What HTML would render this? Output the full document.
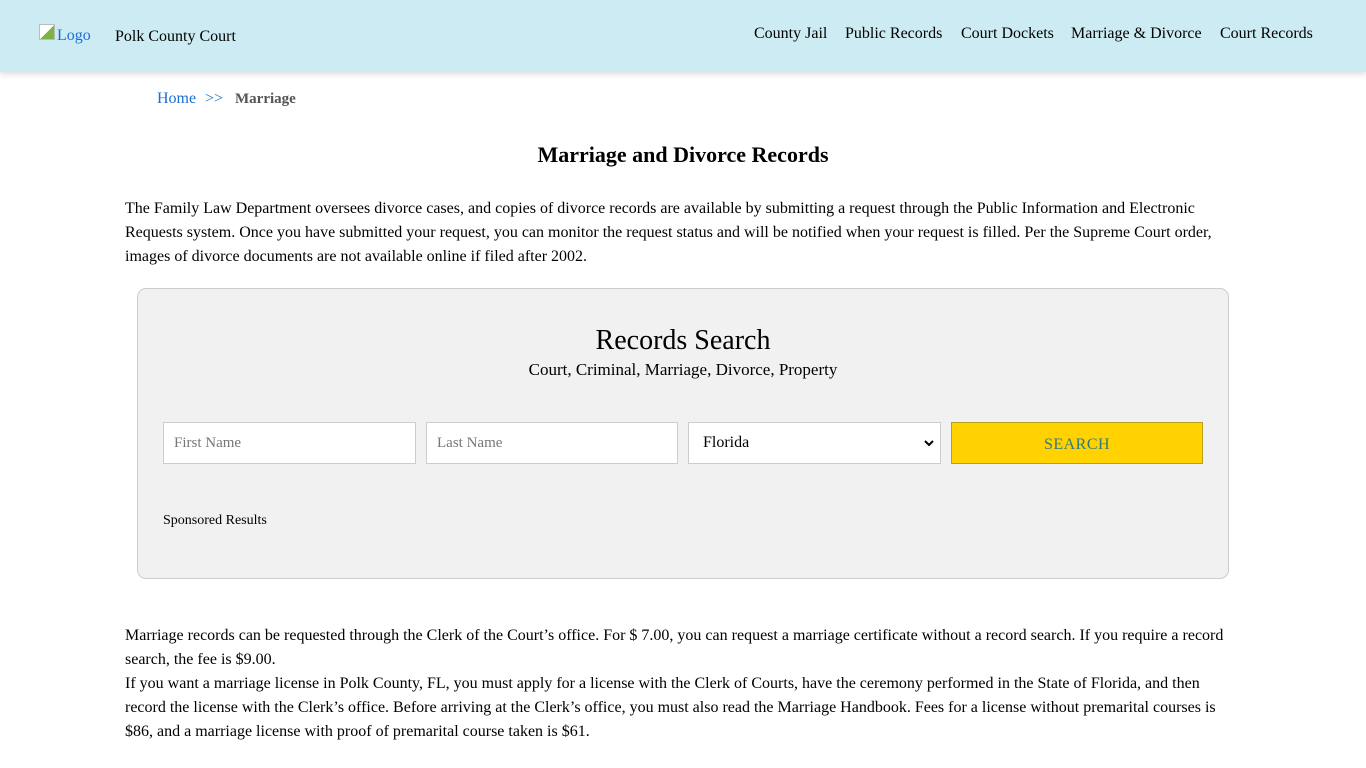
<!DOCTYPE html>
<html><head><meta charset="utf-8"><style>
*{box-sizing:border-box;margin:0;padding:0}
body{width:1366px;height:768px;overflow:hidden;background:#fff;font-family:"Liberation Serif",serif;color:#000}
.hdr{position:absolute;left:0;top:0;width:1366px;height:72px;background:#cdebf2;box-shadow:0 2px 6px rgba(0,0,0,.15)}
.logo{position:absolute;left:57px;top:27px;font-size:16px;color:#1a6fd0}
.img{position:absolute;left:39px;top:24px;width:16px;height:16px;border:1px solid #bbb;background:linear-gradient(135deg,#fff 50%,#7cb342 50%)}
.site{position:absolute;left:115px;top:28px;font-size:16px}
.nav{position:absolute;top:25px;font-size:16px}
.bc{position:absolute;left:157px;top:90px;font-size:16px}
.bc a{color:#1a6fd0;position:absolute;white-space:nowrap}
h1{position:absolute;left:0;width:1366px;top:142px;text-align:center;font-size:22px;font-weight:bold}
p{position:absolute;left:125px;width:1112px;font-size:16px;line-height:24px}
.box{position:absolute;left:137px;top:288px;width:1092px;height:291px;background:#f1f1f1;border:1px solid #ccc;border-radius:9px}
.t1{position:absolute;left:0;width:100%;top:325px;text-align:center;font-size:28px}
.t2{position:absolute;left:0;width:100%;top:360px;text-align:center;font-size:17px}
.in{position:absolute;top:422px;height:42px;background:#fff;border:1px solid #ccc;font-size:15px;color:#777;padding:12px 10px}
.btn{position:absolute;left:951px;top:422px;width:252px;height:42px;background:#ffd200;border:1px solid #b8a020;color:#2f7a80;font-size:16px;text-align:center;line-height:44px;letter-spacing:.5px}
.sp{position:absolute;left:163px;top:513px;font-size:14px}
</style></head><body>
<div class="hdr">
<span class="img"></span><span class="logo">Logo</span><span class="site">Polk County Court</span>
<span class="nav" style="left:754px">County Jail</span>
<span class="nav" style="left:845px">Public Records</span>
<span class="nav" style="left:961px">Court Dockets</span>
<span class="nav" style="left:1071px">Marriage &amp; Divorce</span>
<span class="nav" style="left:1220px">Court Records</span>
</div>
<div class="bc"><a style="left:0">Home</a><a style="left:48px">&gt;&gt;</a><b style="position:absolute;left:78px;color:#555;font-size:15px;white-space:nowrap;top:1px">Marriage</b></div>
<h1>Marriage and Divorce Records</h1>
<p style="top:197px">The Family Law Department oversees divorce cases, and copies of divorce records are available by submitting a request through the Public Information and Electronic Requests system. Once you have submitted your request, you can monitor the request status and will be notified when your request is filled. Per the Supreme Court order, images of divorce documents are not available online if filed after 2002.</p>
<div class="box"></div>
<div class="t1">Records Search</div>
<div class="t2">Court, Criminal, Marriage, Divorce, Property</div>
<div class="in" style="left:163px;width:253px">First Name</div>
<div class="in" style="left:426px;width:252px">Last Name</div>
<div class="in" style="left:688px;width:253px;color:#000;padding-left:14px;font-size:16px;padding-top:11px">Florida<svg style="position:absolute;right:6px;top:17px" width="10" height="7" viewBox="0 0 10 7"><path d="M1 1l4 4 4-4" stroke="#000" stroke-width="2" fill="none"/></svg></div>
<div class="btn">SEARCH</div>
<div class="sp">Sponsored Results</div>
<p style="top:624px">Marriage records can be requested through the Clerk of the Court’s office. For $ 7.00, you can request a marriage certificate without a record search. If you require a record search, the fee is $9.00.<br>If you want a marriage license in Polk County, FL, you must apply for a license with the Clerk of Courts, have the ceremony performed in the State of Florida, and then record the license with the Clerk’s office. Before arriving at the Clerk’s office, you must also read the Marriage Handbook. Fees for a license without premarital courses is $86, and a marriage license with proof of premarital course taken is $61.</p>
</body></html>
